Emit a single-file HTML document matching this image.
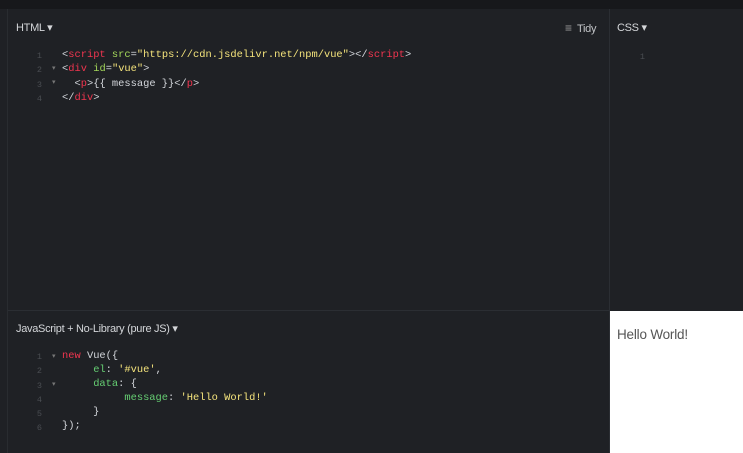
<!DOCTYPE html>
<html><head><meta charset="utf-8"><style>
*{margin:0;padding:0;box-sizing:border-box}
body{width:743px;height:453px;background:#1f2125;position:relative;overflow:hidden;font-family:"Liberation Sans",sans-serif}
.top{position:absolute;left:0;top:0;width:743px;height:9px;background:#17181b}
.vl{position:absolute;left:609px;top:9px;width:1px;height:444px;background:#2b2e33}
.hl{position:absolute;left:8px;top:310px;width:601px;height:1px;background:#2b2e33}
.ll{position:absolute;left:7px;top:9px;width:1px;height:444px;background:#292c30}
.lab{position:absolute;color:#d4d6d9;font-size:11px;letter-spacing:-0.3px}
.code{position:absolute;font-family:"Liberation Mono",monospace;font-size:10.4px;line-height:14.3px;white-space:pre;color:#d4d7dc}
.ln{position:absolute;font-family:"Liberation Mono",monospace;font-size:8.5px;line-height:14.3px;color:#4a4d52;text-align:right;width:10px;white-space:pre}
.t{color:#f0354f}.a{color:#a3d65a}.s{color:#f5e47c}.g{color:#66cf73}.w{color:#d4d7dc}
.ar{font-size:7px;color:#777;position:absolute}
.out{position:absolute;left:610px;top:311px;width:133px;height:142px;background:#fff}
</style></head><body>
<div class="top"></div><div class="ll"></div><div class="vl"></div><div class="hl"></div>
<div class="lab" style="left:16px;top:21px">HTML ▾</div>
<div class="lab" style="left:565px;top:21px;color:#c2c4c7"><span style="font-size:12px;color:#999">≡</span>&nbsp; Tidy</div>
<div class="lab" style="left:617px;top:21px">CSS ▾</div>
<div class="ln" style="left:32px;top:49px">1
2
3
4</div>
<div class="ar" style="left:52px;top:64px">▾</div><div class="ar" style="left:52px;top:78px">▾</div>
<div class="code" style="left:62px;top:48px"><span class="w">&lt;</span><span class="t">script</span> <span class="a">src</span>=<span class="s">"https://cdn.jsdelivr.net/npm/vue"</span>&gt;&lt;/<span class="t">script</span>&gt;
&lt;<span class="t">div</span> <span class="a">id</span>=<span class="s">"vue"</span>&gt;
  &lt;<span class="t">p</span>&gt;{{ message }}&lt;/<span class="t">p</span>&gt;
&lt;/<span class="t">div</span>&gt;</div>
<div class="ln" style="left:635px;top:50px">1</div>
<div class="lab" style="left:16px;top:322px">JavaScript + No-Library (pure JS) ▾</div>
<div class="ln" style="left:32px;top:350px">1
2
3
4
5
6</div>
<div class="ar" style="left:52px;top:352px">▾</div><div class="ar" style="left:52px;top:380px">▾</div>
<div class="code" style="left:62px;top:349px;line-height:14.1px"><span class="t">new</span> Vue({
     <span class="g">el</span>: <span class="s">'#vue'</span>,
     <span class="g">data</span>: {
          <span class="g">message</span>: <span class="s">'Hello World!'</span>
     }
});</div>
<div class="out"><div style="position:absolute;left:7px;top:16px;font-size:13.5px;color:#555;letter-spacing:-0.2px">Hello World!</div></div>
</body></html>
